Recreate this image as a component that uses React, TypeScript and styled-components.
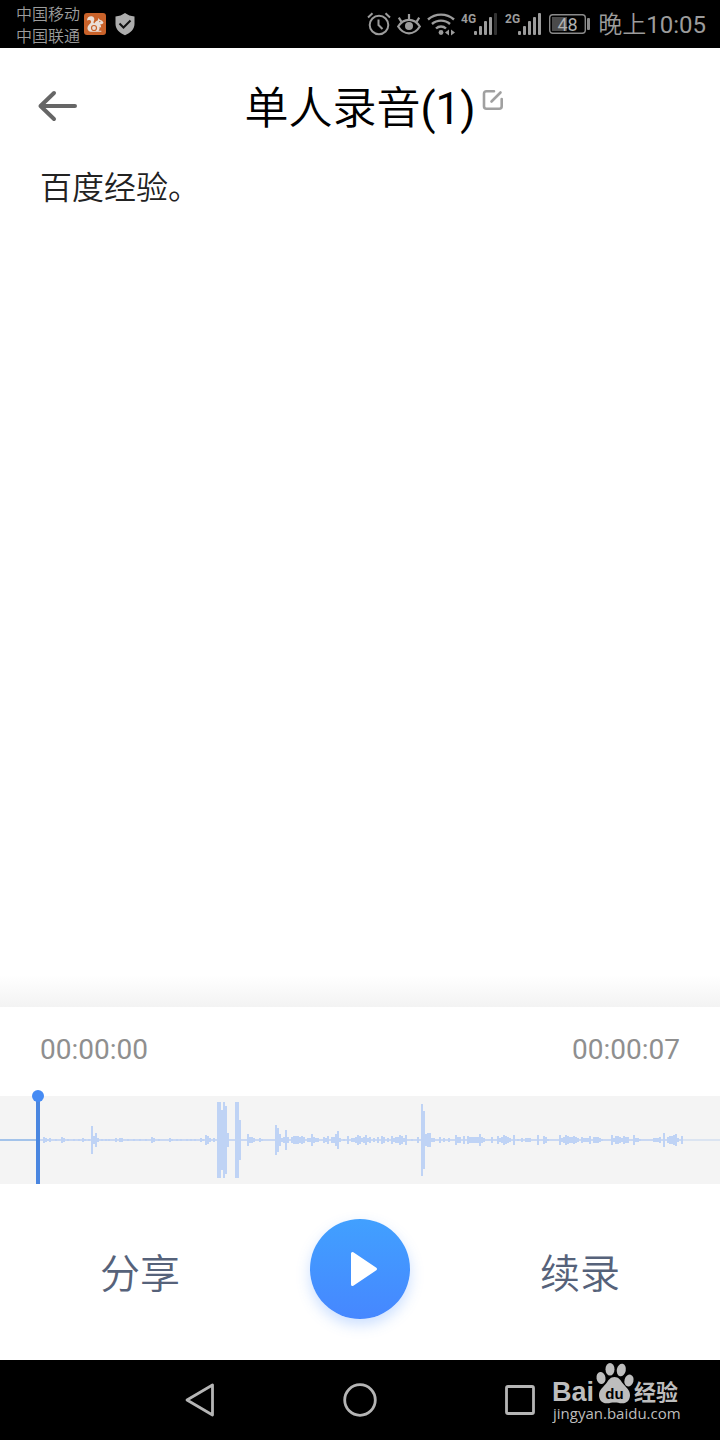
import React from "react";
import styled, { createGlobalStyle } from "styled-components";

const GlobalStyle = createGlobalStyle`
  *, *::before, *::after { box-sizing: border-box; }
  body {
    margin: 0;
    background: #fff;
    font-family: Roboto, "Noto Sans CJK SC", sans-serif;
  }
  button { font-family: inherit; }
`;

const Screen = styled.div`
  display: flex;
  flex-direction: column;
  min-height: 100vh;
  background: #fff;
`;

const StatusBar = styled.div`
  display: flex;
  align-items: center;
  justify-content: space-between;
  height: 48px;
  padding: 0 14px 0 16px;
  background: #000;
  color: #9c9c9c;
`;

const StatusGroup = styled.div<{ $gap: number }>`
  display: flex;
  align-items: center;
  gap: ${(p) => p.$gap}px;
`;

const Carriers = styled.div`
  margin-right: 4px;
  padding-top: 4px;
  font-size: 16px;
  line-height: 22px;
  font-weight: 350;
`;

const Clock = styled.time`
  padding-top: 2px;
  font-size: 24px;
  line-height: 32px;
  font-weight: 350;
  span { font-weight: 400; }
`;

const Header = styled.header`
  display: grid;
  grid-template-columns: 1fr auto 1fr;
  align-items: center;
  height: 116px;
  padding: 0 36px;
`;

const IconButton = styled.button<{ $raised?: boolean }>`
  display: flex;
  justify-self: start;
  padding: 0;
  border: 0;
  background: none;
  cursor: pointer;
  ${(p) => p.$raised && "margin: 0 0 12px 6px;"}
`;

const Title = styled.h1`
  margin: 0;
  padding-top: 6px;
  color: #000;
  font-size: 44px;
  line-height: 64px;
  font-weight: 350;
  span { font-weight: 400; }
`;

const Transcript = styled.main`
  flex: 1;
  padding: 0 40px;
`;

const Paragraph = styled.p`
  margin: 0;
  color: #222;
  font-size: 32px;
  line-height: 48px;
  font-weight: 350;
`;

const Fade = styled.div`
  height: 32px;
  background: linear-gradient(#fff, #f3f3f3);
`;

const Player = styled.section`
  background: #fff;
`;

const Times = styled.div`
  display: flex;
  justify-content: space-between;
  padding: 25px 40px 28px;
  color: #8f8f8f;
  font-size: 28px;
  line-height: 36px;
`;

const Wave = styled.div`
  background: #f4f4f4;
  svg {
    display: block;
    width: 100%;
    height: 88px;
    overflow: visible;
  }
`;

const Controls = styled.div`
  display: flex;
  align-items: center;
  justify-content: space-between;
  height: 176px;
  padding: 4px 100px 0;
`;

const TextButton = styled.button`
  padding: 2px 0 0;
  border: 0;
  background: none;
  color: #56627a;
  font-size: 40px;
  line-height: 56px;
  font-weight: 350;
  cursor: pointer;
`;

const PlayButton = styled.button`
  display: flex;
  align-items: center;
  justify-content: center;
  width: 100px;
  height: 100px;
  margin-bottom: 10px;
  padding: 0;
  border: 0;
  border-radius: 50%;
  background: linear-gradient(#41a0ff, #4687ff);
  box-shadow: 0 6px 14px rgba(70, 140, 255, 0.28);
  cursor: pointer;
`;

const NavBar = styled.nav`
  position: relative;
  display: flex;
  justify-content: center;
  height: 80px;
  background: #000;
`;

const NavButton = styled.button`
  display: flex;
  align-items: center;
  justify-content: center;
  width: 160px;
  padding: 0;
  border: 0;
  background: none;
  cursor: pointer;
`;

const Watermark = styled.div`
  position: absolute;
  top: 0;
  right: 36px;
  svg { display: block; }
`;

/* [x, half height] of every bar in the recording, on a 720 wide scale */
const BARS: [number, number][] = [
  [43, 3], [45, 2], [47, 1], [49, 2], [55, 1], [61, 3], [63, 2], [67, 1], [73, 1], [78, 1],
  [82, 2], [84, 1], [88, 1], [91, 14], [93, 4], [95, 7], [97, 2], [101, 1], [105, 1], [108, 1],
  [115, 2], [119, 2], [121, 2], [127, 1], [133, 1], [139, 1], [145, 1], [151, 3], [153, 2], [158, 1],
  [169, 2], [171, 1], [176, 1], [180, 1], [186, 1], [190, 1], [194, 1], [200, 2], [202, 1], [205, 5],
  [207, 4], [209, 2], [213, 2], [217, 38], [219, 38], [221, 30], [223, 38], [225, 34], [227, 7],
  [235, 38], [237, 38], [239, 20], [247, 6], [249, 3], [251, 3], [253, 2], [259, 2], [261, 1],
  [275, 15], [277, 12], [279, 6], [281, 2], [283, 3], [285, 10], [287, 3], [291, 3], [293, 4],
  [295, 4], [297, 4], [299, 3], [301, 4], [303, 3], [307, 2], [309, 2], [311, 6], [313, 3],
  [315, 2], [317, 2], [323, 3], [325, 2], [327, 4], [331, 3], [333, 3], [335, 6], [337, 9],
  [339, 2], [343, 1], [347, 4], [351, 2], [353, 2], [355, 3], [357, 5], [359, 4], [361, 2],
  [363, 3], [365, 5], [367, 2], [369, 3], [373, 2], [377, 3], [381, 4], [383, 3], [387, 2],
  [391, 4], [393, 2], [395, 3], [397, 3], [399, 5], [401, 4], [403, 2], [405, 5], [411, 1],
  [417, 3], [421, 36], [423, 29], [425, 6], [427, 7], [429, 7], [431, 2], [433, 2], [439, 3],
  [443, 2], [448, 2], [455, 5], [457, 3], [459, 3], [463, 4], [467, 4], [469, 3], [471, 3],
  [473, 3], [475, 3], [477, 3], [479, 6], [481, 3], [483, 2], [491, 3], [497, 4], [499, 2],
  [501, 3], [503, 5], [505, 4], [507, 3], [509, 2], [513, 5], [517, 1], [521, 2], [525, 2],
  [527, 2], [529, 2], [537, 5], [543, 4], [545, 3], [547, 1], [559, 5], [561, 2], [563, 3],
  [565, 5], [567, 4], [569, 3], [571, 3], [573, 4], [575, 3], [577, 2], [581, 3], [583, 2],
  [585, 2], [587, 2], [589, 4], [593, 3], [595, 3], [597, 3], [599, 2], [601, 1], [611, 5],
  [613, 2], [615, 4], [617, 4], [619, 3], [621, 2], [623, 4], [625, 3], [627, 3], [633, 5],
  [635, 2], [637, 2], [639, 1], [653, 2], [655, 2], [657, 2], [659, 3], [663, 7], [667, 3],
  [669, 4], [671, 4], [673, 5], [675, 6], [677, 2], [681, 4],
];

const barPath = BARS.map(([x, h]) => `M${x} ${44 - h}h2v${h * 2}h-2z`).join("");

const AlarmIcon = () => (
  <svg width="24" height="24" viewBox="0 0 24 24" fill="none" stroke="#9c9c9c" strokeWidth="2" aria-hidden="true">
    <circle cx="12" cy="13" r="9.3" />
    <path d="M11.5 7.5V13l4 4M1 5.5 5.5 1.3M23 5.5l-4.500-4.200" />
  </svg>
);

const EyeIcon = () => (
  <svg width="24" height="24" viewBox="0 0 24 24" fill="none" stroke="#9c9c9c" strokeWidth="2.200" aria-hidden="true">
    <path d="M1.200 14.500C4 10 7.500 7.800 12 7.800s8 2.200 10.800 6.700C20 19 16.500 21.300 12 21.300S4 19 1.200 14.500z" />
    <path d="M12 7.800V2M4.500 9.800 1.800 5.600M19.500 9.800l2.700-4.200" />
    <circle cx="12" cy="14" r="4" fill="#9c9c9c" stroke="none" />
  </svg>
);

const WifiIcon = () => (
  <svg width="28" height="24" viewBox="0 0 28 24" fill="none" stroke="#9c9c9c" strokeWidth="2.400" aria-hidden="true">
    <path d="M1 7.500c7.300-6.500 18.700-6.500 26 0M5 12c5-4.500 13-4.500 18 0M9 16.500c2.800-2.700 7.200-2.700 10 0" />
    <circle cx="14" cy="20.500" r="2.400" fill="#9c9c9c" stroke="none" />
    <path d="M22 17.500v6l-4-3zM24 17.500v6l4-3z" fill="#9c9c9c" stroke="none" />
  </svg>
);

const SignalIcon = ({ label, full }: { label: string; full?: boolean }) => (
  <svg width="36" height="24" viewBox="0 0 36 24" fill="#9c9c9c" role="img" aria-label={`${label} signal`}>
    <text x="0" y="11" fontFamily="'Liberation Sans Narrow', Roboto, sans-serif" fontSize="12" fontWeight="700">{label}</text>
    <rect x="13" y="19" width="3" height="4" rx="1" />
    <rect x="18" y="14" width="3" height="9" rx="1" />
    <rect x="23" y="9" width="3" height="14" rx="1" />
    <rect x="28" y="5" width="3" height="18" rx="1" />
    <rect x="33" y="1" width="3" height="22" rx="1" fill={full ? "#9c9c9c" : "#333"} />
  </svg>
);

const BatteryIcon = () => (
  <svg width="41" height="22" viewBox="0 0 41 22" role="img" aria-label="Battery 48%">
    <rect x="0.700" y="1.700" width="35.600" height="18.600" rx="3" fill="none" stroke="#8a8a8a" strokeWidth="1.400" />
    <rect x="3" y="4" width="15" height="14" fill="#4a4a4a" />
    <rect x="38" y="5" width="3" height="12" rx="1" fill="#8a8a8a" />
    <text x="18.500" y="17.500" textAnchor="middle" fontFamily="Roboto, sans-serif" fontSize="18" fill="#b0b0b0">48</text>
  </svg>
);

const SquirrelIcon = () => (
  <svg width="22" height="22" viewBox="0 0 22 22" aria-hidden="true">
    <rect width="22" height="22" rx="3" fill="#c9622a" />
    <path
      d="M3 7.500C3 4.500 5.200 3 7.600 3.300c2.500.4 3.400 2.700 2.300 4.700-.6 1.100-.5 2 .3 2.600 1.300-2 2.500-3 3.700-3.400l.4-2.200 1.500 1.700c1.800.3 3.100 1.500 3.700 3.100-.7 1.200-1.900 1.600-3.300 1.500.8 1.100 1.100 2.200.9 3.400l-1.500-1c.2 1.700-.2 3-1.200 4h3v1.100H6.600C4.200 18.200 3 16.300 3.600 14.200c.4-1.500 1.600-2.500 2.600-3.600C7.400 9.300 7.400 7.700 6.200 7.200 5 6.700 4 7 3 7.500z"
      fill="#eadfd8"
    />
    <circle cx="10" cy="15" r="2.500" fill="none" stroke="#c9622a" strokeWidth="1.200" />
    <circle cx="15.800" cy="8.600" r=".7" fill="#c9622a" />
  </svg>
);

const ShieldIcon = () => (
  <svg width="20" height="24" viewBox="0 0 20 24" aria-hidden="true">
    <path d="M10 1c2.800 2 5.800 3.200 9.500 3.500V12c0 5-4 9-9.500 11.300C4.500 21 .5 17 .5 12V4.500C4.200 4.200 7.200 3 10 1z" fill="#adadad" />
    <path d="m4.500 11.500 4 4 7-7" fill="none" stroke="#111" strokeWidth="2" />
  </svg>
);

export default function App() {
  return (
    <Screen>
      <GlobalStyle />
      <StatusBar>
        <StatusGroup $gap={9}>
          <StatusGroup $gap={0}>
            <Carriers>
              <div>中国移动</div>
              <div>中国联通</div>
            </Carriers>
            <SquirrelIcon />
          </StatusGroup>
          <ShieldIcon />
        </StatusGroup>
        <StatusGroup $gap={8}>
          <StatusGroup $gap={6}>
            <AlarmIcon />
            <EyeIcon />
            <WifiIcon />
            <SignalIcon label="4G" />
          </StatusGroup>
          <SignalIcon label="2G" full />
          <BatteryIcon />
          <Clock>晚上<span>10:05</span></Clock>
        </StatusGroup>
      </StatusBar>

      <Header>
        <IconButton aria-label="返回">
          <svg width="44" height="36" viewBox="0 0 44 36" fill="none" stroke="#666" strokeWidth="4" strokeLinecap="round" strokeLinejoin="round">
            <path d="M39 18H4.500M18 5 4.500 18 18 31" />
          </svg>
        </IconButton>
        <Title>单人录音<span>(1)</span></Title>
        <IconButton aria-label="重命名" $raised>
          <svg width="22" height="22" viewBox="0 0 22 22" fill="none" stroke="#a0a0a0" strokeWidth="2.600" strokeLinecap="round">
            <path d="M12 2.300H4.500Q2 2.300 2 4.800v12.400q0 2.500 2.500 2.500h12.700q2.500 0 2.500-2.500V10M9.500 12.500l9-9" />
          </svg>
        </IconButton>
      </Header>

      <Transcript>
        <Paragraph>百度经验。</Paragraph>
      </Transcript>
      <Fade />

      <Player>
        <Times>
          <span>00:00:00</span>
          <span>00:00:07</span>
        </Times>
        <Wave>
          <svg viewBox="0 0 720 88" preserveAspectRatio="none" role="img" aria-label="录音波形">
            <rect x="0" y="43" width="38" height="2" fill="#a3c3ea" />
            <rect x="40" y="43" width="643" height="2" fill="#c9d8f3" />
            <rect x="683" y="43" width="37" height="2" fill="#dbe4f1" />
            <path d={barPath} fill="#bfd3f5" />
            <rect x="36" y="0" width="4" height="88" fill="#4a86e0" />
            <circle cx="38" cy="0" r="6" fill="#468bf4" />
          </svg>
        </Wave>
        <Controls>
          <TextButton>分享</TextButton>
          <PlayButton aria-label="播放">
            <svg width="36" height="40" viewBox="0 0 36 40" fill="#fff" stroke="#fff" strokeWidth="3" strokeLinejoin="round">
              <path d="M10.500 4.500v31L33.500 20z" />
            </svg>
          </PlayButton>
          <TextButton>续录</TextButton>
        </Controls>
      </Player>

      <NavBar>
        <NavButton aria-label="Back">
          <svg width="36" height="36" viewBox="0 0 36 36" fill="none" stroke="#b5b5b5" strokeWidth="2.800" strokeLinejoin="round">
            <path d="M30.500 3v30L5 18z" />
          </svg>
        </NavButton>
        <NavButton aria-label="Home">
          <svg width="36" height="36" viewBox="0 0 36 36" fill="none" stroke="#b5b5b5" strokeWidth="2.800">
            <circle cx="18" cy="18" r="15.300" />
          </svg>
        </NavButton>
        <NavButton aria-label="Recent apps">
          <svg width="36" height="36" viewBox="0 0 36 36" fill="none" stroke="#b5b5b5" strokeWidth="2.800">
            <rect x="4.500" y="4.500" width="27" height="27" rx="1.500" />
          </svg>
        </NavButton>
        <Watermark>
          <svg width="132" height="66" viewBox="0 0 132 66" fill="#bdbdbd">
            <text x="0" y="41" fontFamily="'Liberation Sans', sans-serif" fontWeight="700" fontSize="27">Bai</text>
            <ellipse cx="49" cy="18" rx="4.500" ry="6" transform="rotate(-10 49 18)" />
            <ellipse cx="58" cy="9.300" rx="4.500" ry="6.300" />
            <ellipse cx="69.300" cy="10" rx="4.500" ry="6.300" transform="rotate(12 69.300 10)" />
            <ellipse cx="77" cy="20.500" rx="4.500" ry="6" transform="rotate(16 77 20.500)" />
            <path d="M62.500 17c4 0 6 3 8 6 2.500 3.500 7.500 6.500 7.500 12 0 5.500-3.500 8.500-8 8.300-3-.1-4.500-.8-7.500-.8s-4.500.7-7.500.8c-4.500.2-8-2.800-8-8.300 0-5.500 5-8.500 7.500-12 2-3 4-6 8-6z" />
            <text x="62.500" y="39" textAnchor="middle" fill="#000" fontFamily="'Liberation Sans', sans-serif" fontWeight="700" fontSize="15">du</text>
            <text x="82" y="40" fontFamily="'Noto Sans CJK SC', sans-serif" fontWeight="700" fontSize="22">经验</text>
            <text x="1" y="59" fontFamily="'Open Sans', sans-serif" fontSize="15" fontWeight="400">jingyan.baidu.com</text>
          </svg>
        </Watermark>
      </NavBar>
    </Screen>
  );
}
